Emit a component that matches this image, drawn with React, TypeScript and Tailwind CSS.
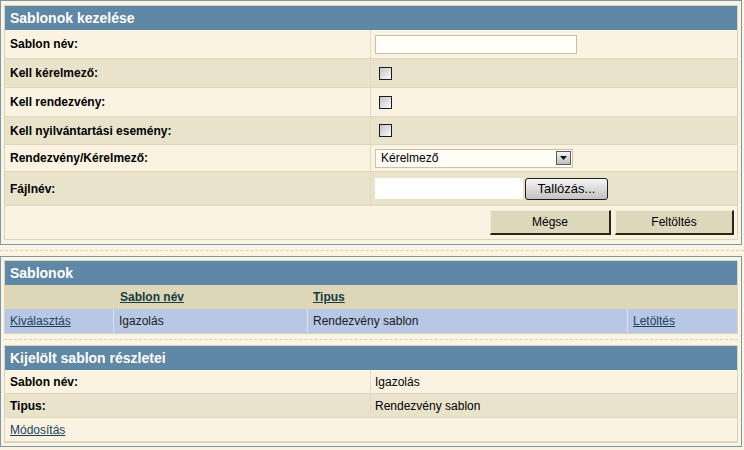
import type { ReactNode } from "react";

const font = "font-['Liberation_Sans',Arial,sans-serif]";
const cream = "bg-[#faf3e1]";
const beige = "bg-[#e9e3cb]";

function PanelHeader({ title }: { title: string }) {
  return (
    <div className="h-[24px] bg-[#6088a6] px-[5px] flex items-center text-white font-bold text-[14px] leading-none">
      {title}
    </div>
  );
}

function FormRow({
  label,
  bg,
  height,
  children,
}: {
  label: string;
  bg: string;
  height: string;
  children?: ReactNode;
}) {
  return (
    <div className={`flex border-b border-[#ddd6bd] ${bg} ${height}`}>
      <div className="w-[366px] shrink-0 flex items-center pl-[5px] border-r border-[#e2dbc3] font-bold text-[12px] text-black">
        {label}
      </div>
      <div className="flex-1 flex items-center pl-[4px]">{children}</div>
    </div>
  );
}

function Checkbox() {
  return (
    <div className="ml-[4px] w-[13px] h-[13px] border border-[#1c1c1c] bg-linear-to-br from-[#c4c4c4] to-[#fbfbfb]" />
  );
}

function Separator() {
  return (
    <div className="h-[11px] flex items-center">
      <div className="w-full border-t border-dashed border-[#d9cfae]" />
    </div>
  );
}

export default function App() {
  return (
    <div className={`${font} w-[744px] h-[450px] bg-[#faf4e4] text-[12px] text-black overflow-hidden`}>
      {/* Sablonok kezelése */}
      <div className="w-[742px] border border-[#7e96a5] pt-[4px] pb-[4px] pl-[3px] pr-[3px]">
        <div className="border border-[#dcd4b8]">
          <PanelHeader title="Sablonok kezelése" />
          <FormRow label="Sablon név:" bg={cream} height="h-[29px]">
            <div className="w-[202px] h-[19px] bg-[#fffef7] border border-[#c5c0ac]" />
          </FormRow>
          <FormRow label="Kell kérelmező:" bg={beige} height="h-[29px]">
            <Checkbox />
          </FormRow>
          <FormRow label="Kell rendezvény:" bg={cream} height="h-[29px]">
            <Checkbox />
          </FormRow>
          <FormRow label="Kell nyilvántartási esemény:" bg={beige} height="h-[28px]">
            <Checkbox />
          </FormRow>
          <FormRow label="Rendezvény/Kérelmező:" bg={cream} height="h-[27px]">
            <div className="w-[198px] h-[19px] bg-[#fffef6] border border-[#c8c2a8] flex items-center justify-between pl-[5px] pr-[1px]">
              <span className="text-[12px]">Kérelmező</span>
              <div className="w-[15px] h-[14px] border border-[#5a5a5a] bg-linear-to-b from-[#f4f4f4] to-[#bdbdbd] flex items-center justify-center">
                <svg width="7" height="4" viewBox="0 0 7 4">
                  <path d="M0 0h7L3.5 4z" fill="#111" />
                </svg>
              </div>
            </div>
          </FormRow>
          <FormRow label="Fájlnév:" bg={beige} height="h-[34px]">
            <div className="flex items-center gap-[2px]">
              <div className="w-[148px] h-[21px] bg-white" />
              <button className="w-[83px] h-[22px] rounded-[3px] border border-[#1e1e1e] bg-linear-to-b from-[#f6f6f6] to-[#c2c2c2] text-[13px] text-black leading-none">
                Tallózás...
              </button>
            </div>
          </FormRow>
          <div className={`h-[33px] ${cream} flex items-center justify-end gap-[4px] pr-[3px]`}>
            <button className="w-[121px] h-[25px] bg-[#ddd7bc] border-t border-l border-[#f3eed9] border-r-2 border-b-2 border-r-[#2b2616] border-b-[#2b2616] text-[12px]">
              Mégse
            </button>
            <button className="w-[119px] h-[25px] bg-[#ddd7bc] border-t border-l border-[#f3eed9] border-r-2 border-b-2 border-r-[#2b2616] border-b-[#2b2616] text-[12px]">
              Feltöltés
            </button>
          </div>
        </div>
      </div>

      <Separator />

      {/* Sablonok + részletek */}
      <div className="w-[742px] border border-[#7e96a5] pt-[3px] pb-[3px] pl-[3px] pr-[3px]">
        <div className="border border-[#dcd4b8]">
          <PanelHeader title="Sablonok" />
          <div className="h-[24px] bg-[#ddd6b9] flex items-center font-bold text-[#163c3e]">
            <div className="w-[109px]" />
            <div className="w-[194px] pl-[6px] underline">Sablon név</div>
            <div className="w-[320px] pl-[5px] underline">Tipus</div>
            <div className="flex-1" />
          </div>
          <div className="h-[24px] bg-[#b7c7e5] flex">
            <div className="w-[109px] flex items-center pl-[5px] border-r border-[#dde0ee]">
              <a className="underline text-[#203f58] cursor-pointer">Kiválasztás</a>
            </div>
            <div className="w-[194px] flex items-center pl-[5px] border-r border-[#dde0ee] text-[#1b1b1b]">
              Igazolás
            </div>
            <div className="w-[320px] flex items-center pl-[5px] border-r border-[#dde0ee] text-[#1b1b1b]">
              Rendezvény sablon
            </div>
            <div className="flex-1 flex items-center pl-[5px]">
              <a className="underline text-[#203f58] cursor-pointer">Letöltés</a>
            </div>
          </div>
        </div>

        <Separator />

        <div className="border border-[#dcd4b8]">
          <PanelHeader title="Kijelölt sablon részletei" />
          <FormRow label="Sablon név:" bg={cream} height="h-[24px]">
            <span>Igazolás</span>
          </FormRow>
          <FormRow label="Tipus:" bg={beige} height="h-[24px]">
            <span>Rendezvény sablon</span>
          </FormRow>
          <div className={`h-[24px] ${cream} flex items-center pl-[5px] border-b border-[#ddd6bd]`}>
            <a className="underline text-[#203f58] cursor-pointer">Módosítás</a>
          </div>
        </div>
      </div>
    </div>
  );
}
